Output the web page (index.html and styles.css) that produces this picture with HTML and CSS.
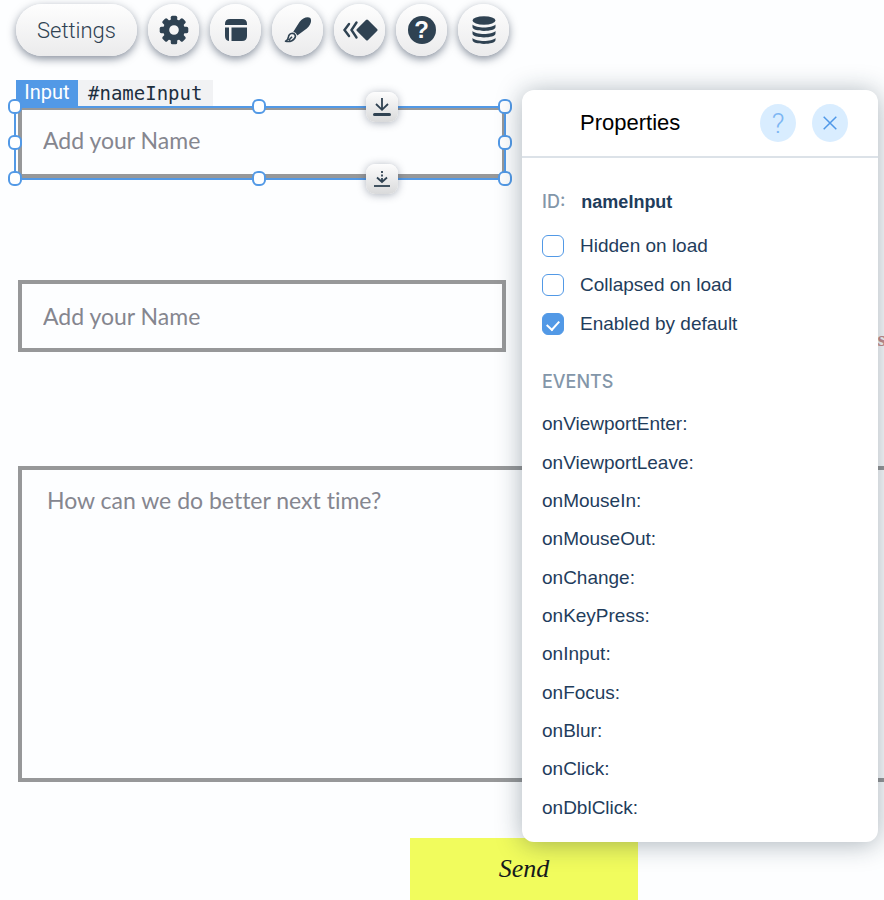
FILE: index.html
```html
<!DOCTYPE html>
<html lang="en">
<head>
<meta charset="utf-8">
<meta name="viewport" content="width=device-width, initial-scale=1">
<title>Form editor</title>
<link rel="stylesheet" href="styles.css">
</head>
<body>
<main class="stage">
  <nav class="toolbar" aria-label="Element tools">
    <button class="tool tool-wide" type="button">Settings</button>
    <button class="tool" type="button" aria-label="Configure">
      <svg width="30" height="30" viewBox="-15 -15 30 30">
        <circle r="7.800" fill="none" stroke="currentColor" stroke-width="6"/>
        <g fill="currentColor">
          <rect x="-3.200" y="-14.300" width="6.400" height="6" rx="1.600"/>
          <rect x="-3.200" y="-14.300" width="6.400" height="6" rx="1.600" transform="rotate(45)"/>
          <rect x="-3.200" y="-14.300" width="6.400" height="6" rx="1.600" transform="rotate(90)"/>
          <rect x="-3.200" y="-14.300" width="6.400" height="6" rx="1.600" transform="rotate(135)"/>
          <rect x="-3.200" y="-14.300" width="6.400" height="6" rx="1.600" transform="rotate(180)"/>
          <rect x="-3.200" y="-14.300" width="6.400" height="6" rx="1.600" transform="rotate(225)"/>
          <rect x="-3.200" y="-14.300" width="6.400" height="6" rx="1.600" transform="rotate(270)"/>
          <rect x="-3.200" y="-14.300" width="6.400" height="6" rx="1.600" transform="rotate(315)"/>
        </g>
      </svg>
    </button>
    <button class="tool" type="button" aria-label="Layout">
      <svg width="24" height="24" viewBox="0 0 24 24" fill="currentColor">
        <path d="M1 7V6Q1 1 6 1H18Q23 1 23 6V7Z"/>
        <path d="M1 9.500H5V23Q1 22.500 1 18Z"/>
        <path d="M7.500 9.500H23V18Q23 23 18 23H7.500Z"/>
      </svg>
    </button>
    <button class="tool" type="button" aria-label="Design">
      <svg width="28" height="28" viewBox="0 0 28 28">
        <path d="M26.300 2C23.500 .2 18.500 2 15.500 6L9.300 15.800Q12.300 16.300 13.300 19.500L22.800 12.500C26.300 9.500 28.200 4.800 26.300 2Z" fill="currentColor"/>
        <path d="M8.500 17.200C5.500 17.500 4.500 19.500 4.300 21.700C4 23.800 3 24.700 1.500 25.200C6 26.300 10.800 24.500 11.500 20.200C11.200 18.500 10 17.300 8.500 17.200ZM4.800 24.300L8 20.800" fill="none" stroke="currentColor" stroke-width="1.600" stroke-linejoin="round"/>
      </svg>
    </button>
    <button class="tool" type="button" aria-label="Animation">
      <svg width="36" height="24" viewBox="0 0 36 24">
        <path d="M7 6L2.500 12L7 18M14.500 4.500L9.500 12L14.500 19.500" fill="none" stroke="currentColor" stroke-width="2.400" stroke-linecap="round"/>
        <path d="M25 3L34 12L25 21L16 12Z" fill="currentColor" stroke="currentColor" stroke-width="3" stroke-linejoin="round"/>
      </svg>
    </button>
    <button class="tool" type="button" aria-label="Help"><span class="help-mark">?</span></button>
    <button class="tool" type="button" aria-label="Connect to data">
      <svg width="24" height="30" viewBox="0 0 24 30" fill="currentColor">
        <ellipse cx="12" cy="5.500" rx="11.500" ry="4.200"/>
        <path d="M.5 9.500C4 13.500 20 13.500 23.500 9.500V12C23.500 17.200 .5 17.200 .5 12Z"/>
        <path d="M.5 16C4 20 20 20 23.500 16V18.500C23.500 23.700 .5 23.700 .5 18.500Z"/>
        <path d="M.5 23C4 27 20 27 23.500 23V25C23.500 30.200 .5 30.200 .5 25Z"/>
      </svg>
    </button>
  </nav>

  <div class="tags">
    <span class="tag-type">Input</span><span class="tag-id">#nameInput</span>
  </div>

  <form class="form">
    <div class="selected">
      <input class="field" type="text" placeholder="Add your Name" aria-label="Name">
      <div class="frame">
        <i class="handle top left"></i><i class="handle top center"></i><i class="handle top right"></i>
        <i class="handle middle left"></i><i class="handle middle right"></i>
        <i class="handle bottom left"></i><i class="handle bottom center"></i><i class="handle bottom right"></i>
        <button class="push push-top" type="button" aria-label="Push down">
          <svg width="18" height="20" viewBox="0 0 18 20" fill="none" stroke="currentColor">
            <path d="M9 1V12.500M3 7L9 12.800L15 7" stroke-width="1.800"/>
            <path d="M1.500 17.500H16.500" stroke-width="3" stroke-linecap="round"/>
          </svg>
        </button>
        <button class="push push-bottom" type="button" aria-label="Stretch down">
          <svg width="18" height="20" viewBox="0 0 18 20" fill="none" stroke="currentColor">
            <path d="M9 2V4M9 5.500V7.500M9 9V13M4 8.500L9 13L14 8.500" stroke-width="1.800"/>
            <path d="M1 17H17" stroke-width="1.800"/>
          </svg>
        </button>
      </div>
    </div>
    <div class="row">
      <input class="field" type="text" placeholder="Add your Name" aria-label="Second name">
      <span class="page-text">s</span>
    </div>
    <textarea class="message" placeholder="How can we do better next time?" aria-label="Feedback"></textarea>
    <button class="send" type="button">Send</button>
  </form>

  <aside class="panel">
    <header class="panel-head">
      <h2 class="panel-title">Properties</h2>
      <button class="round" type="button" aria-label="Panel help">?</button>
      <button class="round" type="button" aria-label="Close">
        <svg width="14" height="14" viewBox="0 0 14 14"><path d="M.7 .7L13.300 13.300M13.300 .7L.7 13.300" stroke="#4f98e8" stroke-width="1.500"/></svg>
      </button>
    </header>
    <div class="panel-body">
      <p class="id-row"><span class="caption">ID:</span><strong>nameInput</strong></p>
      <label class="check"><input type="checkbox">Hidden on load</label>
      <label class="check"><input type="checkbox">Collapsed on load</label>
      <label class="check"><input type="checkbox" checked>Enabled by default</label>
      <h3 class="caption events-title">EVENTS</h3>
      <ul class="events">
        <li>onViewportEnter:</li>
        <li>onViewportLeave:</li>
        <li>onMouseIn:</li>
        <li>onMouseOut:</li>
        <li>onChange:</li>
        <li>onKeyPress:</li>
        <li>onInput:</li>
        <li>onFocus:</li>
        <li>onBlur:</li>
        <li>onClick:</li>
        <li>onDblClick:</li>
      </ul>
    </div>
  </aside>
</main>
</body>
</html>
```
FILE: styles.css
```css
* { box-sizing: border-box; }
body {
  margin: 0;
  background: #fdfeff;
  color: #1f3d5c;
  font-family: "Liberation Sans", Arial, sans-serif;
  font-size: 19px;
}
button, input, textarea { font: inherit; color: inherit; margin: 0; }
svg { display: block; }

.stage { position: relative; overflow: hidden; padding-top: 4px; }

.toolbar { display: flex; gap: 11px; padding-left: 16px; }
.tool {
  display: flex;
  align-items: center;
  justify-content: center;
  width: 51px;
  height: 52px;
  padding: 0;
  border: 0;
  border-radius: 26px;
  background: linear-gradient(#fefefe, #ebebec);
  box-shadow: 0 3px 8px rgba(22, 35, 60, 0.5);
  color: #2f4252;
}
.tool-wide { width: 121px; font: 300 22px Roboto, sans-serif; }
.help-mark {
  width: 28px;
  height: 28px;
  border-radius: 50%;
  background: #2f4252;
  color: #fafafa;
  font-size: 24px;
  font-weight: bold;
  line-height: 28px;
}

.tags { display: flex; margin-top: 24px; padding-left: 16px; line-height: 26px; }
.tag-type {
  width: 62px;
  background: #5299e6;
  color: #fff;
  text-align: center;
  font: 20px/24px Roboto, sans-serif;
}
.tag-id {
  padding: 0 11px 0 10px;
  background: #f1f2f4;
  color: #1d2f3f;
  font-family: "DejaVu Sans Mono", monospace;
}

.form { padding-left: 18px; }
.field, .message {
  display: block;
  border: 4px solid #979899;
  border-radius: 0;
  background: #fdfeff;
  font: 23px Lato, sans-serif;
  font-variant-ligatures: none;
  outline: 0;
}
.field { width: 488px; height: 72px; padding: 0 21px; }
.field::placeholder, .message::placeholder { color: #85868f; opacity: 1; }
.selected { position: relative; width: 488px; }
.selected .field { padding-bottom: 4px; }
.frame {
  position: absolute;
  inset: 0 0 -2px -4px;
  border: 2px solid #5299e6;
}
.handle {
  position: absolute;
  width: 14px;
  height: 15px;
  border: 2px solid #5299e6;
  border-radius: 6px;
  background: #fff;
}
.handle.left { left: -8px; }
.handle.center { left: 236px; }
.handle.right { right: -8px; }
.handle.top { top: -9px; }
.handle.middle { top: 27px; }
.handle.bottom { bottom: -8px; }
.push {
  position: absolute;
  right: 106px;
  display: flex;
  align-items: center;
  justify-content: center;
  width: 32px;
  height: 30px;
  padding: 0;
  border: 0;
  border-radius: 9px;
  background: linear-gradient(#fdfdfd, #d9dadb);
  box-shadow: 0 1px 8px rgba(22, 35, 60, 0.35);
  color: #2f4252;
}
.push-top { top: -16px; }
.push-bottom { bottom: -16px; }

.row { display: flex; align-items: center; justify-content: space-between; margin-top: 102px; }
.page-text {
  align-self: flex-end;
  margin-right: -2px;
  color: #c98f8f;
  font: bold 22px/26px "Liberation Serif", serif;
}
.message {
  width: 100%;
  height: 316px;
  margin-top: 114px;
  padding: 16px 25px;
  border-right: 0;
  line-height: 28px;
  resize: none;
}
.send {
  display: block;
  width: 228px;
  height: 62px;
  margin: 56px 0 0 392px;
  border: 0;
  background: #f1fc5d;
  color: #161a1c;
  font: italic 26px "Liberation Serif", serif;
}

.panel {
  position: absolute;
  top: 90px;
  right: 6px;
  width: 356px;
  border-radius: 12px;
  background: #fff;
  box-shadow: 0 2px 26px rgba(22, 45, 61, 0.36);
}
.panel-head {
  display: flex;
  align-items: center;
  gap: 16px;
  height: 68px;
  padding: 0 30px 0 58px;
  border-bottom: 2px solid #dce2e8;
}
.panel-title { flex: 1; margin: 0; color: #000; font-size: 22px; font-weight: normal; }
.round {
  display: flex;
  align-items: center;
  justify-content: center;
  width: 36px;
  height: 38px;
  padding: 0;
  border: 0;
  border-radius: 50%;
  background: #d9edff;
  color: #7db6f3;
  font: 300 28px Roboto, sans-serif;
}
.panel-body { padding: 24px 20px 15px; }
.id-row { display: flex; gap: 16px; margin: 0 0 4px; line-height: 40px; font-size: 18px; }
.caption { color: #8396a9; font: 500 18px Inter, sans-serif; line-height: inherit; }
.check { display: flex; align-items: center; gap: 16px; height: 39px; }
.check input {
  appearance: none;
  width: 22px;
  height: 22px;
  border: 1px solid #5299e6;
  border-radius: 6px;
  background: #fff;
}
.check input:checked { display: grid; place-items: start center; background: #5299e6; }
.check input:checked::before {
  content: "";
  width: 6px;
  height: 10px;
  margin-top: 4px;
  border: solid #fff;
  border-width: 0 2px 2px 0;
  transform: rotate(42deg);
}
.events-title { margin: 20px 0 4px; line-height: 38px; }
.events {
  display: grid;
  align-items: center;
  min-height: 422px;
  margin: 0;
  padding: 0;
  list-style: none;
}
```
